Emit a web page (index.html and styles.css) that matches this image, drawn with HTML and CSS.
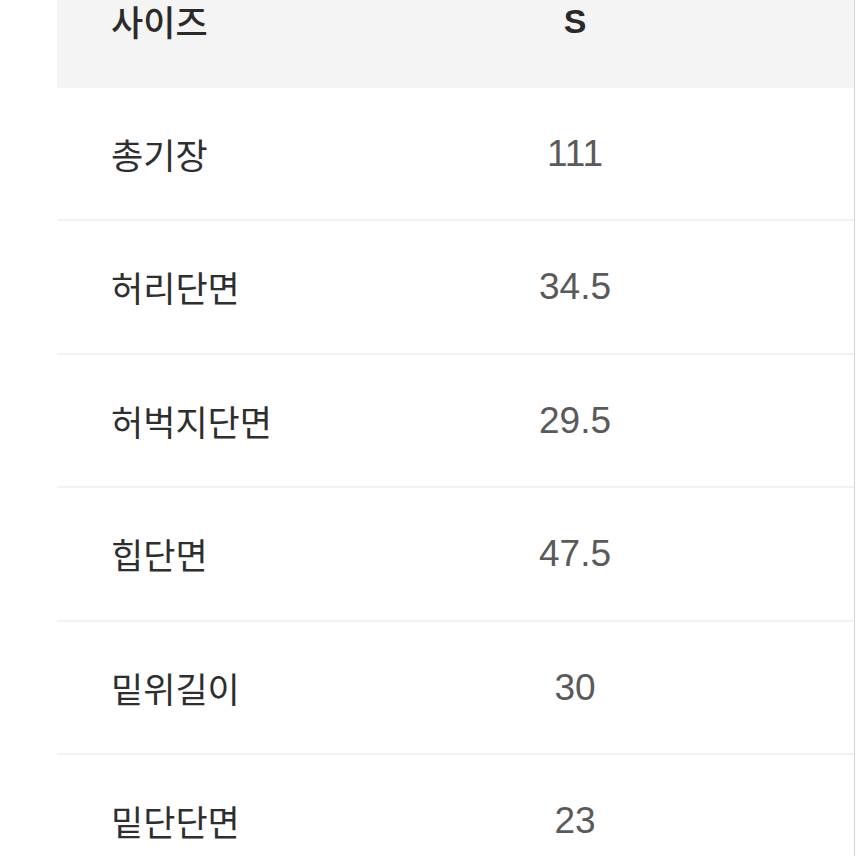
FILE: index.html
```html
<!DOCTYPE html>
<html lang="ko">
<head>
<meta charset="utf-8">
<link rel="stylesheet" href="styles.css">
</head>
<body>
<div class="page">
  <div class="table">
    <div class="row head">
      <div class="label">사이즈</div>
      <div class="value">S</div>
      <div></div>
    </div>
    <div class="row"><div class="label">총기장</div><div class="value">111</div><div></div></div>
    <div class="row"><div class="label">허리단면</div><div class="value">34.5</div><div></div></div>
    <div class="row"><div class="label">허벅지단면</div><div class="value">29.5</div><div></div></div>
    <div class="row"><div class="label">힙단면</div><div class="value">47.5</div><div></div></div>
    <div class="row"><div class="label">밑위길이</div><div class="value">30</div><div></div></div>
    <div class="row"><div class="label">밑단단면</div><div class="value">23</div><div></div></div>
  </div>
</div>
</body>
</html>
```
FILE: styles.css
```css
html, body {
  margin: 0;
  padding: 0;
  background: #fff;
  overflow: hidden;
}
.page {
  width: 856px;
  height: 856px;
  overflow: hidden;
  display: flex;
  justify-content: flex-end;
}
.table {
  width: 797px;
  margin-right: 1px;
  border-right: 1px solid #d4d4d4;
  margin-top: -46px;
  font-family: "Noto Sans CJK KR", "Noto Sans", sans-serif;
  font-size: 35px;
}
.row {
  box-sizing: border-box;
  height: 133.5px;
  display: grid;
  grid-template-columns: 403px 230px 1fr;
  align-items: center;
  border-bottom: 2px solid #f2f2f2;
}
.row.head {
  background: #f4f4f4;
  border-bottom: none;
}
.label {
  padding-left: 54px;
  color: #2e2e2e;
  line-height: 1;
}
.value {
  text-align: center;
  color: #5a5a5a;
  font-family: "Liberation Sans", Arial, sans-serif;
  font-size: 37px;
  line-height: 1;
}
.head .label {
  color: #2a2a2a;
  font-weight: 500;
}
.head .value {
  color: #2a2a2a;
  font-weight: 700;
  font-size: 34px;
}
```
